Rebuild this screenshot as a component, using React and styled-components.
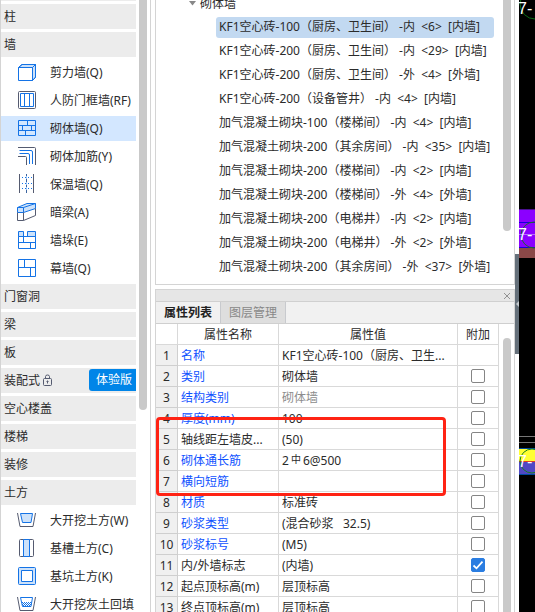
import React, { useState } from 'react';
import styled, { createGlobalStyle } from 'styled-components';

const GlobalStyle = createGlobalStyle`
  * {
    box-sizing: border-box;
  }

  body {
    margin: 0;
    overflow: hidden;
    background: #fff;
    color: #2b2b2b;
    font-family: 'Noto Sans', 'Noto Sans CJK SC', sans-serif;
    font-size: 12px;
  }

  button, input {
    margin: 0;
    padding: 0;
    border: 0;
    background: none;
    color: inherit;
    font: inherit;
  }
`;

const Workspace = styled.div`
  display: flex;
  height: 100vh;
  overflow: hidden;
`;

const Sidebar = styled.nav`
  display: flex;
  flex: none;
  width: 151px;
  border-left: 1px solid #d4d4d4;
  border-right: 1px solid #d4d4d4;
  overflow: hidden;
`;

// the list is scrolled down by most of its first category
const CategoryList = styled.div`
  display: flex;
  flex: 1;
  flex-direction: column;
  gap: 3px;
  min-width: 0;
  margin-top: -24px;
`;

const Category = styled.button`
  display: flex;
  flex: none;
  align-items: center;
  gap: 3px;
  height: 25px;
  padding-bottom: 2px;
  padding-left: 3px;
  background: #ececec;
  text-align: left;
  white-space: nowrap;
`;

const TrialBadge = styled.span`
  height: 22px;
  margin-top: 1px;
  margin-left: auto;
  padding: 0 4px 0 7px;
  border-radius: 3px 0 0 3px;
  background: #0085e8;
  color: #fff;
  line-height: 22px;
`;

const Tool = styled.button`
  display: flex;
  flex: none;
  align-items: center;
  gap: 13px;
  height: 25px;
  padding-bottom: 2px;
  padding-left: 16px;
  background: ${props => (props.$active ? '#d3e7ff' : 'transparent')};
  text-align: left;
  white-space: nowrap;
  overflow: hidden;

  svg {
    flex: none;
    margin-top: 2px;
  }
`;

const ScrollTrack = styled.div`
  flex: none;
  width: ${props => props.$width}px;
  padding-top: ${props => props.$offset || 0}px;
  padding-left: ${props => props.$inset}px;
`;

const ScrollThumb = styled.div`
  width: 8px;
  height: ${props => props.$length};
  border-radius: ${props => (props.$end === 'top' ? '4px 4px 0 0' : '0 0 4px 4px')};
  background: #c9c9c9;
`;

const Dock = styled.main`
  display: flex;
  flex: 1;
  flex-direction: column;
  gap: 4px;
  min-width: 0;
  padding-left: 4px;
`;

const TreePanel = styled.section`
  display: flex;
  flex: none;
  border: 1px solid #d4d4d4;
  border-top: 0;
  overflow: hidden;
`;

const Tree = styled.div`
  flex: 1;
  min-width: 0;
  margin-top: -9px;
  padding-bottom: 5px;
`;

const TreeGroup = styled.div`
  display: flex;
  align-items: center;
  gap: 4px;
  height: 24px;
  padding-left: 33px;
`;

const TreeRow = styled.div`
  display: flex;
  align-items: center;
  height: 24px;
  padding-left: 60px;
`;

const TreeItem = styled.button`
  height: 21px;
  padding: 0 14px 2px 3px;
  border-radius: 3px;
  background: ${props => (props.$active ? '#c2d9f1' : 'transparent')};
  line-height: 19px;
  white-space: pre;
`;

const PropertyPanel = styled.section`
  display: flex;
  flex: 1;
  flex-direction: column;
  min-height: 0;
  border: 1px solid #d4d4d4;
  border-bottom: 0;
  overflow: hidden;
`;

const TitleBar = styled.header`
  display: flex;
  flex: none;
  align-items: center;
  justify-content: flex-end;
  height: 12px;
  padding-right: 3px;
  border-bottom: 1px solid #d0d0d0;
  background: #e6e6e6;
`;

const CloseButton = styled.button`
  display: flex;
  color: #929292;
`;

const Tabs = styled.div`
  display: flex;
  flex: none;
  height: 22px;
  border-bottom: 1px solid #cfcfcf;
  background: #f1f1f1;
`;

const Tab = styled.button`
  width: 65px;
  border-right: 1px solid #c8cace;
  background: ${props => (props.$active ? '#f1f1f1' : '#dedede')};
  color: ${props => (props.$active ? '#222' : '#888')};
  font-weight: ${props => (props.$active ? 700 : 400)};
  line-height: 21px;
`;

const PanelBody = styled.div`
  display: flex;
  flex: 1;
  min-height: 0;
`;

const TableArea = styled.div`
  position: relative;
  flex: 1;
  min-width: 0;
`;

const Table = styled.table`
  width: 100%;
  table-layout: fixed;
  border-collapse: separate;
  border-spacing: 0;
`;

const HeadCell = styled.th`
  height: 21px;
  padding: 2px 0 0;
  border-right: 1px solid #d9d9d9;
  border-bottom: 1px solid #d9d9d9;
  font-weight: 400;
  line-height: 18px;
`;

const IndexCell = styled.td`
  height: 21px;
  padding: 2px 0 0;
  border-right: 1px solid #cfcfcf;
  border-bottom: 1px solid #cfcfcf;
  background: #f0f0f0;
  line-height: 18px;
  text-align: center;
`;

const Cell = styled.td`
  height: 21px;
  padding: 2px 3px 0;
  border-right: 1px solid #d9d9d9;
  border-bottom: 1px solid #d9d9d9;
  color: ${props => props.$color || 'inherit'};
  line-height: 18px;
  white-space: pre;
  overflow: hidden;
`;

const CheckCell = styled(Cell)`
  padding: 0 3px;
`;

const RebarGrade = styled.span`
  padding: 0 2px;
  font-size: 10px;
  line-height: 12px;
  vertical-align: 2px;
`;

const Checkbox = styled.input.attrs({ type: 'checkbox' })`
  display: block;
  width: 14px;
  height: 14px;
  margin: 0 auto;
  border: 1px solid #858585;
  border-radius: 2px;
  background: #fff;
  appearance: none;

  &:checked {
    border-color: #2a7de1;
    background: #2a7de1 url("data:image/svg+xml,%3Csvg xmlns='http://www.w3.org/2000/svg' viewBox='0 0 12 12'%3E%3Cpath d='M1.5 6.5l3 2.8 6-6.6' fill='none' stroke='white' stroke-width='1.8'/%3E%3C/svg%3E") center / 12px 12px no-repeat;
  }
`;

const Highlight = styled.div`
  position: absolute;
  top: 93px;
  right: 53px;
  left: 0;
  height: 79px;
  border: 3px solid #ff2314;
  border-radius: 4px;
  pointer-events: none;
`;

const Splitter = styled.div`
  display: flex;
  flex: none;
  width: 4px;
  padding-top: 254px;
`;

const SplitterHandle = styled.button`
  display: flex;
  flex: 1;
  align-items: center;
  justify-content: center;
  height: 100px;
  background: #65707a;
`;

const Viewport = styled.aside`
  flex: none;
  width: 16px;
  background: #000;
`;

const BLUE = '#1473e6';
const GREY = '#555b70';
const PALE = '#cde2fa';

const icons = {
  shearWall: (
    <>
      <path d="M1.5 5.5L5 2.5H18.5V15L15.5 18.5V5.5Z" fill={PALE} />
      <path d="M1.5 5.5H15.5V18.5H1.5Z" fill="#fff" />
      <path d="M1.5 5.5L5 2.5H18.5V15.5L15.5 18.5M15.5 5.5L18.5 2.5" />
    </>
  ),
  doorFrame: (
    <>
      <rect x="1.5" y="1.5" width="17" height="17" rx="1" stroke={GREY} />
      <path d="M3.5 3.5H16.5V16.5H3.5ZM7.5 3.5V16.5M12.5 3.5V16.5" />
    </>
  ),
  masonry: (
    <path d="M1.5 2.5H18.5V17.5H1.5ZM1.5 7.5H18.5M1.5 12.5H18.5M10.5 2.5V7.5M5.5 7.5V12.5M14.5 7.5V12.5M8.5 12.5V17.5" />
  ),
  rebar: (
    <>
      <path d="M1 1.5H17.5Q18.5 1.5 18.5 2.5V19M1 10.5H8.5Q9.5 10.5 9.5 11.5V19" stroke={GREY} />
      <path d="M2.5 4.5H14Q15.5 4.5 15.5 6V18M2.5 7.5H11Q12.5 7.5 12.5 9V18" />
    </>
  ),
  insulation: (
    <>
      <path d="M2.5 0V19M16.5 0V19M9.5 0V2M9.5 5V8M9.5 11V13M9.5 16V19" stroke={GREY} />
      <path d="M5 3.5H16M5 9.5H16M5 14.5H16" strokeDasharray="1 2" />
      <path d="M9.5 0V19" strokeOpacity="0.4" />
    </>
  ),
  hiddenBeam: (
    <>
      <path d="M0.5 5.5L10 1.5H18.5V6.5L6.5 10.5H0.5Z" fill={PALE} />
      <path d="M0.5 5.5H6.5L18.5 1.5M6.5 5.5V10.5" />
      <path d="M0.5 10.5V18.5H6.5L18.5 13.5V6.5M6.5 10.5V18.5" stroke={GREY} />
    </>
  ),
  pier: (
    <>
      <path d="M1.5 1.5H6.5V6.5H1.5ZM10.5 1.5H18.5V6.5H10.5Z" fill={PALE} />
      <path d="M1.5 6.5H18.5V18.5H1.5ZM1.5 12.5H18.5M6.5 6.5V12.5M13.5 12.5V18.5" />
    </>
  ),
  curtainWall: <path d="M1.5 1.5H18.5V18.5H1.5ZM1.5 9.5H18.5M7.5 1.5V9.5M13.5 9.5V18.5" />,
  excavation: (
    <>
      <path d="M0.5 3L3 16.5H16L18.5 3" stroke={GREY} />
      <path d="M3.5 3.5H15.5L14 12.5H5.5Z" fill={PALE} />
    </>
  ),
  trench: (
    <>
      <rect x="2.5" y="1.5" width="14" height="17" rx="1" stroke={GREY} />
      <path d="M6.5 1.5H12.5V18.5H6.5Z" fill={PALE} />
    </>
  ),
  pit: (
    <>
      <rect x="1.5" y="1.5" width="17" height="17" rx="1" fill={PALE} />
      <path d="M4.5 4.5H15.5V15.5H4.5Z" fill="#fff" />
    </>
  ),
  backfill: (
    <>
      <path d="M0.5 3L3 16.5H16L18.5 3" stroke={GREY} />
      <path d="M3.5 3.5H15.5L14 12.5H5.5Z" />
      <path d="M5 8.5H15M5 10.5H14" strokeDasharray="1 1" />
      <path d="M6 9.5H14M6 11.5H14" strokeDasharray="1 1" />
    </>
  ),
};

const Icon = ({ name }) => (
  <svg width="20" height="21" viewBox="0 0 20 21" fill="none" stroke={BLUE} aria-hidden="true">
    {icons[name]}
  </svg>
);

const LockIcon = () => (
  <svg width="10" height="12" viewBox="0 0 10 12" fill="none" stroke={GREY} aria-hidden="true">
    <rect x="0.5" y="4.5" width="8" height="7" rx="1" />
    <path d="M2.5 4.5V2.5Q2.5 1 4.5 1T6.5 2.5V4.5M4.5 6.5V9.5" />
    <path d="M3.5 7.5H5.5" />
  </svg>
);

const categories = [
  { name: '轴线' },
  { name: '柱' },
  {
    name: '墙',
    tools: [
      ['shearWall', '剪力墙(Q)'],
      ['doorFrame', '人防门框墙(RF)'],
      ['masonry', '砌体墙(Q)'],
      ['rebar', '砌体加筋(Y)'],
      ['insulation', '保温墙(Q)'],
      ['hiddenBeam', '暗梁(A)'],
      ['pier', '墙垛(E)'],
      ['curtainWall', '幕墙(Q)'],
    ],
  },
  { name: '门窗洞' },
  { name: '梁' },
  { name: '板' },
  { name: '装配式', trial: true },
  { name: '空心楼盖' },
  { name: '楼梯' },
  { name: '装修' },
  {
    name: '土方',
    tools: [
      ['excavation', '大开挖土方(W)'],
      ['trench', '基槽土方(C)'],
      ['pit', '基坑土方(K)'],
      ['backfill', '大开挖灰土回填'],
    ],
  },
];

const components = [
  'KF1空心砖-100（厨房、卫生间） -内  <6>  [内墙]',
  'KF1空心砖-200（厨房、卫生间） -内  <29>  [内墙]',
  'KF1空心砖-200（厨房、卫生间） -外  <4>  [外墙]',
  'KF1空心砖-200（设备管井） -内  <4>  [内墙]',
  '加气混凝土砌块-100（楼梯间） -内  <4>  [内墙]',
  '加气混凝土砌块-200（其余房间） -内  <35>  [内墙]',
  '加气混凝土砌块-200（楼梯间） -内  <2>  [内墙]',
  '加气混凝土砌块-200（楼梯间） -外  <4>  [外墙]',
  '加气混凝土砌块-200（电梯井） -内  <2>  [内墙]',
  '加气混凝土砌块-200（电梯井） -外  <2>  [外墙]',
  '加气混凝土砌块-200（其余房间） -外  <37>  [外墙]',
];

const LINK = '#0f52ff';

const properties = [
  { name: '名称', value: 'KF1空心砖-100（厨房、卫生...', color: LINK, noExtra: true },
  { name: '类别', value: '砌体墙', color: LINK },
  { name: '结构类别', value: '砌体墙', color: LINK, valueColor: '#8c8c8c' },
  { name: '厚度(mm)', value: '100', color: LINK },
  { name: '轴线距左墙皮...', value: '(50)' },
  { name: '砌体通长筋', value: <>2<RebarGrade>中</RebarGrade>6@500</>, color: LINK },
  { name: '横向短筋', value: '', color: LINK },
  { name: '材质', value: '标准砖', color: LINK },
  { name: '砂浆类型', value: '(混合砂浆   32.5)', color: LINK },
  { name: '砂浆标号', value: '(M5)', color: LINK },
  { name: '内/外墙标志', value: '(内墙)' },
  { name: '起点顶标高(m)', value: '层顶标高' },
  { name: '终点顶标高(m)', value: '层顶标高' },
];

const Drawing = () => (
  <svg width="16" height="612" viewBox="0 0 16 612" fill="none" fontFamily="Liberation Sans" fontSize="16">
    <circle cx="16" cy="4" r="15" stroke="#0b6b16" />
    <text x="-1" y="14" fill="#fff">7-</text>
    <rect y="209" width="16" height="38" fill="#8b00ff" />
    <path d="M0 209.5H16" stroke="#4a1090" />
    <path d="M0 222.5H16M0 247.5H16" stroke="#1400d8" />
    <rect y="248" width="16" height="10" fill="#8b4848" />
    <circle cx="15" cy="235" r="13" stroke="#1d6b2a" />
    <path d="M0 234.5H16" stroke="#b46cff" />
    <text x="-1" y="240" fill="#fff">7-</text>
    <path d="M0 436.5H16M0 442.5H16" stroke="#777" />
    <rect y="449" width="16" height="13" fill="#ffff33" />
    <rect y="462" width="16" height="13" fill="#5048c4" />
    <path d="M0 448.5H16M0 474.5H16" stroke="#004ba0" />
    <path d="M0 461.5H16" stroke="#e03c24" />
    <circle cx="13" cy="461" r="12" stroke="#168020" />
    <text x="-1" y="467" fill="#fff">7-</text>
  </svg>
);

const App = () => {
  const [activeTool, setActiveTool] = useState('masonry');
  const [activeItem, setActiveItem] = useState(0);
  const [activeTab, setActiveTab] = useState(0);
  const [checked, setChecked] = useState({ 10: true });

  const toggle = (index) => {
    setChecked(prev => ({ ...prev, [index]: !prev[index] }));
  };

  return (
    <>
      <GlobalStyle />
      <Workspace>
        <Sidebar>
          <CategoryList>
            {categories.map(category => (
              <React.Fragment key={category.name}>
                <Category>
                  {category.name}
                  {category.trial && <LockIcon />}
                  {category.trial && <TrialBadge>体验版</TrialBadge>}
                </Category>
                {category.tools && category.tools.map(([icon, label]) => (
                  <Tool key={icon} $active={icon === activeTool} onClick={() => setActiveTool(icon)}>
                    <Icon name={icon} />
                    {label}
                  </Tool>
                ))}
              </React.Fragment>
            ))}
          </CategoryList>
          <ScrollTrack $width={14} $inset={3}>
            <ScrollThumb $length="410px" />
          </ScrollTrack>
        </Sidebar>

        <Dock>
          <TreePanel>
            <Tree>
              <TreeGroup>
                <svg width="7" height="5" viewBox="0 0 7 5" fill="#888" aria-hidden="true">
                  <path d="M0 0H7L3.5 4.5Z" />
                </svg>
                砌体墙
              </TreeGroup>
              {components.map((label, index) => (
                <TreeRow key={label}>
                  <TreeItem $active={index === activeItem} onClick={() => setActiveItem(index)}>
                    {label}
                  </TreeItem>
                </TreeRow>
              ))}
            </Tree>
            <ScrollTrack $width={12} $inset={1}>
              <ScrollThumb $length="231px" />
            </ScrollTrack>
          </TreePanel>

          <PropertyPanel>
            <TitleBar>
              <CloseButton aria-label="关闭">
                <svg width="8" height="8" viewBox="0 0 8 8" stroke="currentColor" aria-hidden="true">
                  <path d="M1 1L7 7M7 1L1 7" />
                </svg>
              </CloseButton>
            </TitleBar>
            <Tabs>
              {['属性列表', '图层管理'].map((label, index) => (
                <Tab key={label} $active={index === activeTab} onClick={() => setActiveTab(index)}>
                  {label}
                </Tab>
              ))}
            </Tabs>
            <PanelBody>
              <TableArea>
                <Table>
                  <colgroup>
                    <col width="22" />
                    <col width="101" />
                    <col />
                    <col width="41" />
                  </colgroup>
                  <thead>
                    <tr>
                      <HeadCell />
                      <HeadCell>属性名称</HeadCell>
                      <HeadCell>属性值</HeadCell>
                      <HeadCell>附加</HeadCell>
                    </tr>
                  </thead>
                  <tbody>
                    {properties.map((row, index) => (
                      <tr key={row.name}>
                        <IndexCell>{index + 1}</IndexCell>
                        <Cell $color={row.color}>{row.name}</Cell>
                        <Cell $color={row.valueColor}>{row.value}</Cell>
                        <CheckCell>
                          {!row.noExtra && (
                            <Checkbox
                              aria-label={row.name}
                              checked={!!checked[index]}
                              onChange={() => toggle(index)}
                            />
                          )}
                        </CheckCell>
                      </tr>
                    ))}
                  </tbody>
                </Table>
                <Highlight />
              </TableArea>
              <ScrollTrack $width={15} $inset={4} $offset={14}>
                <ScrollThumb $length="100%" $end="top" />
              </ScrollTrack>
            </PanelBody>
          </PropertyPanel>
        </Dock>

        <Splitter>
          <SplitterHandle aria-label="收起面板">
            <svg width="4" height="6" viewBox="0 0 4 6" fill="#c4c9ce" aria-hidden="true">
              <path d="M4 0V6L1 3Z" />
            </svg>
          </SplitterHandle>
        </Splitter>
        <Viewport>
          <Drawing />
        </Viewport>
      </Workspace>
    </>
  );
};

export default App;
